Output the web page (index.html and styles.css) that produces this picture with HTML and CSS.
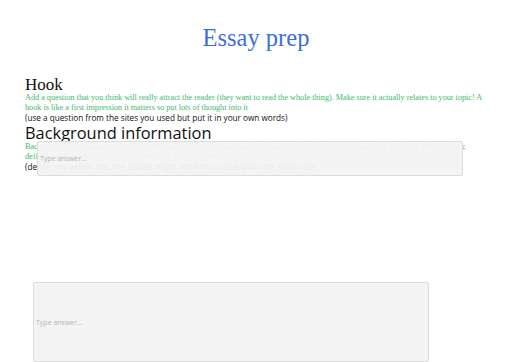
FILE: index.html
```html
<!DOCTYPE html>
<html>
<head>
  <link rel="stylesheet" href="styles.css">
</head>
<body>

<h1 class="title">Essay prep</h1>

<div class="sheet">
  <h2 class="hook-title">Hook</h2>
  <p class="hint">Add a question that you think will really attract the reader (they want to read the whole thing). Make sure it actually relates to your topic! A hook is like a first impression it matters so put lots of thought into it</p>
  <p class="note">(use a question from the sites you used but put it in your own words)</p>

  <h2 class="section-title">Background information</h2>
  <p class="hint">Background information helps the reader understand what your essay is about, so give them a little history, the key facts and a specific definition of your topic so they are ready for the rest of the essay</p>
  <p class="note">(define any words that the reader might not know and explain the main idea)</p>

  <input class="answer answer-hook" type="text" placeholder="Type answer...">
</div>

<input class="answer answer-bg" type="text" placeholder="Type answer...">

</body>
</html>
```

FILE: styles.css
```css
body {
  margin: 0;
  padding: 24px 25px 0 25px;
}
.title {
  font-family: "Liberation Serif", serif;
  font-weight: normal;
  font-size: 24.5px;
  color: #3d6fd9;
  text-align: center;
  margin: 0 0 23px 0;
}
.sheet {
  position: relative;
}
.hook-title {
  font-family: "Liberation Serif", serif;
  font-weight: normal;
  font-size: 17px;
  line-height: 16px;
  color: #111;
  margin: 0;
  padding-top: 2px;
}
.section-title {
  font-family: "Open Sans", sans-serif;
  font-weight: normal;
  font-size: 16.4px;
  color: #111;
  margin: 0;
  line-height: 19px;
}
.hint {
  font-family: "Liberation Serif", serif;
  font-size: 8.2px;
  line-height: 10px;
  color: #3dba6c;
  margin: 0 -3px 0 0;
}
.note {
  font-family: "Open Sans", sans-serif;
  font-size: 8.2px;
  line-height: 10px;
  color: #111;
  margin: 0;
}
.answer {
  display: block;
  box-sizing: border-box;
  background: rgba(243, 243, 243, 0.95);
  border: 1px solid #dcdcdc;
  border-radius: 2px;
  font-family: "Open Sans", sans-serif;
  font-size: 7px;
  color: #555;
  padding: 0 2px;
  outline: none;
}
.answer::placeholder {
  color: #b5b5b5;
}
.answer-hook {
  position: absolute;
  left: 12px;
  top: 66px;
  width: 426px;
  height: 35px;
}
.answer-bg {
  margin: 110px 0 0 8px;
  width: 396px;
  height: 80px;
}
```
